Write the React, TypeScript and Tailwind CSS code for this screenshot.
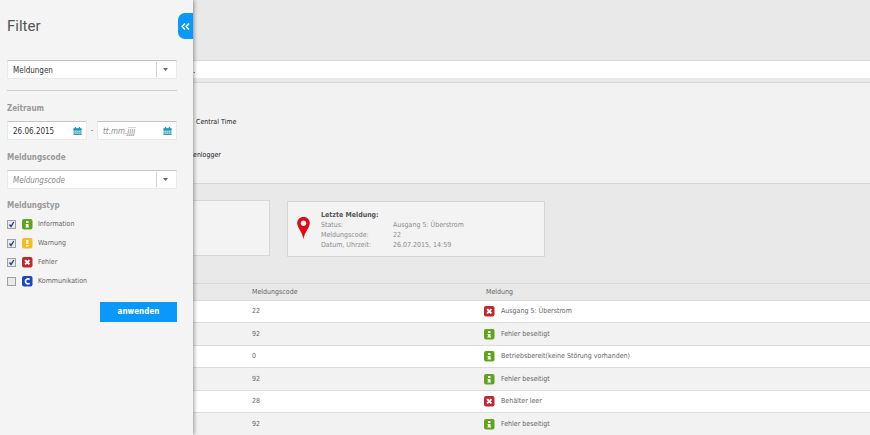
// src/App.tsx
import React, { useState } from "react";

type MessageType = "info" | "warning" | "error" | "communication";

interface Message {
  code: number;
  type: MessageType;
  text: string;
}

const messages: Message[] = [
  { code: 22, type: "error", text: "Ausgang 5: Überstrom" },
  { code: 92, type: "info", text: "Fehler beseitigt" },
  { code: 0, type: "info", text: "Betriebsbereit(keine Störung vorhanden)" },
  { code: 92, type: "info", text: "Fehler beseitigt" },
  { code: 28, type: "error", text: "Behälter leer" },
  { code: 92, type: "info", text: "Fehler beseitigt" },
];

const messageTypes: { type: MessageType; label: string; checked: boolean }[] = [
  { type: "info", label: "Information", checked: true },
  { type: "warning", label: "Warnung", checked: true },
  { type: "error", label: "Fehler", checked: true },
  { type: "communication", label: "Kommunikation", checked: false },
];

const typeColors: Record<MessageType, string> = {
  info: "#5ea51c",
  warning: "#f6bd1c",
  error: "#c1272d",
  communication: "#1b48bf",
};

function TypeIcon({ type }: { type: MessageType }) {
  return (
    <svg viewBox="0 0 22 22" className="size-[11px] shrink-0" aria-hidden="true">
      <rect width="21" height="21" rx="4" fill={typeColors[type]} />
      {type === "info" && (
        <path d="M8 4h5v4H8zM7 10h6v5h1v2H7v-2h1v-3H7z" fill="#fff" />
      )}
      {type === "warning" && (
        <path d="M8 4h5v8H8zM8 14h5v3H8z" fill="#fff" fillOpacity="0.85" />
      )}
      {type === "error" && (
        <path d="M7.500 7.500l6 6M13.500 7.500l-6 6" stroke="#fff" strokeWidth="3.800" strokeLinecap="square" />
      )}
      {type === "communication" && (
        <path d="M15.500 6.500C10.500 4.500 7 6.500 7 10.700s3.500 6.200 8.500 4.200" fill="none" stroke="#fff" strokeWidth="3.400" />
      )}
    </svg>
  );
}

function CalendarIcon() {
  return (
    <svg viewBox="0 0 20 18" className="h-2 w-[9px]" aria-hidden="true">
      <path d="M1 3h18v14H1z" fill="#5fb8d3" />
      <path d="M1 3h18v4H1z" fill="#2391b0" />
      <path d="M4 0h3v4H4zM13 0h3v4h-3z" fill="#2391b0" />
      <path d="M4 9h3v2H4zM8.500 9h3v2h-3zM13 9h3v2h-3zM4 13h3v2H4zM8.500 13h3v2h-3zM13 13h3v2h-3z" fill="#a5dcec" />
      <path d="M1 16h18v2H1z" fill="#2391b0" />
    </svg>
  );
}

function PinIcon() {
  return (
    <svg viewBox="0 0 26 44" className="mb-[3px] h-[22px] w-[13px] shrink-0" aria-hidden="true">
      <path
        d="M13 0C5.600 0 .5 5.400.5 12.400.5 21 10.500 29 13 44c2.500-15 12.500-23 12.500-31.600C25.500 5.400 20.400 0 13 0z"
        fill="#e30613"
      />
      <circle cx="13" cy="12.500" r="5.500" fill="#f3f3f3" />
    </svg>
  );
}

function Arrow() {
  return (
    <svg viewBox="0 0 10 6" className="h-[3px] w-[5px]" aria-hidden="true">
      <path d="M0 0h10L5 6z" fill="#666" />
    </svg>
  );
}

const fieldClass =
  "flex h-[19px] items-center border border-[#e9e9e9] border-t-[#c4c4c4] bg-white";

const headingClass = "text-[8px] leading-3 font-bold text-[#999]";

function DateField({ label, value }: { label: string; value?: string }) {
  return (
    <div className={`${fieldClass} w-20 pr-1`}>
      <input
        type="text"
        aria-label={label}
        defaultValue={value}
        placeholder="tt.mm.jjjj"
        className="w-0 flex-1 pt-0.5 pl-[5px] text-[8px] leading-4 text-[#333] outline-none placeholder:text-[#888] placeholder:italic"
      />
      <button type="button" aria-label={`${label} wählen`}>
        <CalendarIcon />
      </button>
    </div>
  );
}

function FilterPanel() {
  const [types, setTypes] = useState(messageTypes);

  const toggle = (type: MessageType) =>
    setTypes(types.map((t) => (t.type === type ? { ...t, checked: !t.checked } : t)));

  return (
    <aside className="relative z-10 w-[193px] shrink-0 bg-[#f4f4f4] pr-4 pl-[7px] shadow-[1px_0_4px_rgba(0,0,0,0.4)]">
      <button
        type="button"
        aria-label="Filter schließen"
        className="absolute top-[13px] right-0 flex h-[26px] w-[15px] items-center justify-center rounded-l-[7px] bg-[#0a98fa]"
      >
        <svg viewBox="0 0 18 14" className="h-[7px] w-[9px]" aria-hidden="true">
          <path d="M8 1L2.500 7 8 13M16 1l-5.500 6L16 13" fill="none" stroke="#fff" strokeWidth="3" />
        </svg>
      </button>

      <form onSubmit={(e) => e.preventDefault()}>
        <h1 className="pt-4 font-[Roboto,sans-serif] text-[15px] leading-5 text-[#555]">
          Filter
        </h1>

        <div className={`${fieldClass} relative mt-6`}>
          <select
            aria-label="Ansicht"
            className="h-full w-full appearance-none pt-0.5 pl-[5px] text-[8px] text-[#333] outline-none"
          >
            <option>Meldungen</option>
          </select>
          <span className="pointer-events-none absolute inset-y-px right-0 flex w-5 items-center border-l border-[#d0d0d0] pl-1.5">
            <Arrow />
          </span>
        </div>

        <hr className="mt-[11px] border-[#cfcfcf]" />

        <fieldset>
          <legend className={`${headingClass} pt-3`}>Zeitraum</legend>
          <div className="mt-1.5 flex items-center justify-between text-[8px] text-[#777]">
            <DateField label="Datum von" value="26.06.2015" />
            -
            <DateField label="Datum bis" />
          </div>
        </fieldset>

        <label htmlFor="code" className={`${headingClass} mt-3 block`}>
          Meldungscode
        </label>
        <div className={`${fieldClass} mt-1.5`}>
          <input
            id="code"
            type="text"
            placeholder="Meldungscode"
            className="w-0 flex-1 pt-0.5 pl-[5px] text-[8px] leading-4 outline-none placeholder:text-[#888] placeholder:italic"
          />
          <button
            type="button"
            aria-label="Codes anzeigen"
            className="flex h-[15px] w-5 items-center border-l border-[#d0d0d0] pl-1.5"
          >
            <Arrow />
          </button>
        </div>

        <fieldset>
          <legend className={`${headingClass} pt-[11px]`}>Meldungstyp</legend>
          <div className="mt-[3px]">
            {types.map(({ type, label, checked }) => (
              <label key={type} className="flex h-[19px] items-center text-[7px] text-[#666]">
                <span className="relative flex">
                  <input
                    type="checkbox"
                    checked={checked}
                    onChange={() => toggle(type)}
                    className="size-[9px] appearance-none border border-[#a0a0a0] bg-[#e9e9e9]"
                  />
                  {checked && (
                    <svg viewBox="0 0 9 9" className="pointer-events-none absolute size-[9px]" aria-hidden="true">
                      <path d="M2.500 4.500L4 6.500 6.800 2" fill="none" stroke="#27408b" strokeWidth="1.400" />
                    </svg>
                  )}
                </span>
                <span className="mr-[5px] ml-1.5 flex">
                  <TypeIcon type={type} />
                </span>
                {label}
              </label>
            ))}
          </div>
        </fieldset>

        <div className="mt-[11px] flex justify-end">
          <button
            type="submit"
            className="h-5 w-[77px] bg-[#0a98fa] text-[8px] font-bold text-white"
          >
            anwenden
          </button>
        </div>
      </form>
    </aside>
  );
}

function LastMessage() {
  return (
    <section className="mt-px flex h-14 w-[258px] items-center border border-[#d6d6d6] bg-[#f3f3f3] pl-[9px] text-[7px] text-[#8c8c8c]">
      <PinIcon />
      <div className="pt-px pl-[11px]">
        <h2 className="text-[7px] leading-[10px] font-bold text-[#555]">Letzte Meldung:</h2>
        <dl className="grid grid-cols-[72px_auto] leading-[10px]">
          <dt>Status:</dt>
          <dd>Ausgang 5: Überstrom</dd>
          <dt>Meldungscode:</dt>
          <dd>22</dd>
          <dt>Datum, Uhrzeit:</dt>
          <dd>26.07.2015, 14:59</dd>
        </dl>
      </div>
    </section>
  );
}

function MessageTable() {
  return (
    <table className="w-full table-fixed border-collapse text-left text-[7px] text-[#666]">
      <thead>
        <tr className="h-[17px] border-y border-[#d9d9d9]">
          <th className="w-[59px]" />
          <th className="w-[232px] font-normal">Meldungscode</th>
          <th className="pl-0.5 font-normal">Meldung</th>
        </tr>
      </thead>
      <tbody>
        {messages.map((message, i) => (
          <tr
            key={i}
            className="border-b border-[#dcdcdc] odd:h-[22px] odd:bg-white even:h-[23px] even:bg-[#f2f2f2]"
          >
            <td />
            <td>{message.code}</td>
            <td>
              <span className="flex items-center gap-1.5">
                <TypeIcon type={message.type} />
                {message.text}
              </span>
            </td>
          </tr>
        ))}
      </tbody>
    </table>
  );
}

export default function App() {
  return (
    <div className="flex h-screen overflow-hidden bg-[#e9e9e9] font-['DejaVu_Sans_Condensed','DejaVu_Sans',sans-serif]">
      <FilterPanel />
      <main className="min-w-0 flex-1">
        <div className="mt-[60px] h-[18px] border-t border-[#d6d6d6] bg-white text-[8px] leading-5 text-[#333]">
          .
        </div>
        <div className="mt-1 h-[102px] border-y border-[#d6d6d6] bg-[#f2f2f2] text-[7px] leading-3 text-[#222]">
          <p className="pt-[33px] pl-[3px]">Central Time</p>
          <p className="pt-[21px]">enlogger</p>
        </div>
        <div className="flex items-start gap-[17px] pt-4 pb-[26px]">
          <div className="h-14 w-[77px] border border-l-0 border-[#d6d6d6] bg-[#f3f3f3]" />
          <LastMessage />
        </div>
        <MessageTable />
      </main>
    </div>
  );
}
